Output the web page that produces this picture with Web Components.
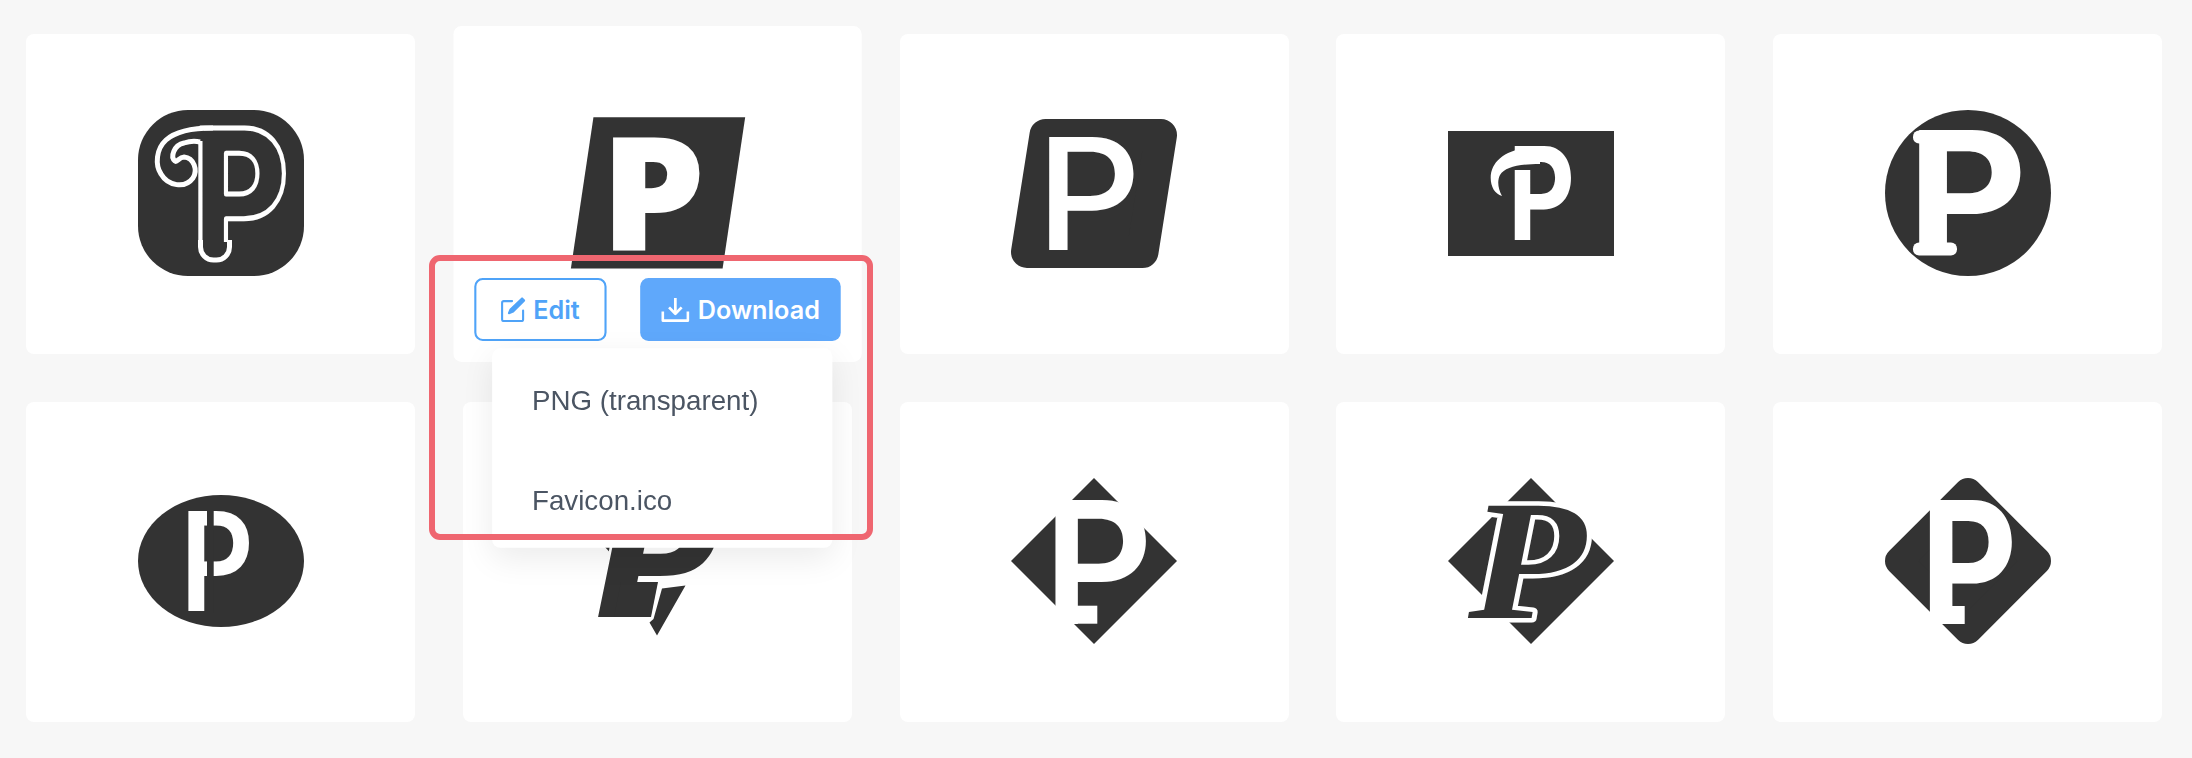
<!DOCTYPE html>
<html>
<head>
<meta charset="utf-8">
<title>Logos</title>
<style>
  html, body { margin: 0; background: #f7f7f7; }
  body { font-family: 'Inter', sans-serif; overflow: hidden; }
</style>
</head>
<body>
<logo-page>
  <logo-card><logo-mark name="curl"></logo-mark></logo-card>
  <logo-card active>
    <logo-mark name="slant"></logo-mark>
    <button-row slot="overlay"></button-row>
    <download-menu slot="overlay">
      <menu-item>PNG (transparent)</menu-item>
      <menu-item>Favicon.ico</menu-item>
    </download-menu>
  </logo-card>
  <logo-card><logo-mark name="round-slant"></logo-mark></logo-card>
  <logo-card><logo-mark name="rect"></logo-mark></logo-card>
  <logo-card><logo-mark name="circle"></logo-mark></logo-card>
  <logo-card><logo-mark name="oval"></logo-mark></logo-card>
  <logo-card><logo-mark name="shard"></logo-mark></logo-card>
  <logo-card><logo-mark name="diamond"></logo-mark></logo-card>
  <logo-card><logo-mark name="diamond-italic"></logo-mark></logo-card>
  <logo-card><logo-mark name="diamond-round"></logo-mark></logo-card>
  <red-frame slot="frame"></red-frame>
</logo-page>

<script>
const DARK = '#333';

// each logo is drawn at 166 wide, the P stays real text
const MARKS = {
  curl: { h: 166, svg: `
    <rect width="166" height="166" rx="50" fill="${DARK}"/>
    <text transform="translate(54 150) scale(.82 1)" font-family="Inter" font-weight="800" font-size="181" fill="${DARK}" stroke="#fff" stroke-width="5" stroke-linejoin="round">P</text>
    <path d="M62 20V31" stroke="${DARK}" stroke-width="8"/>
    <rect x="56" y="132" width="42" height="24" fill="${DARK}"/>
    <path d="M62.500 130V137a13 13 0 0 0 13 13h3a13 13 0 0 0 13-13V130" fill="none" stroke="#fff" stroke-width="5"/>
    <path d="M75 18C55 18 38 21 28 30C18 39 17 55 23 64C30 76 47 79 55 68C60 60 56 48 46 47C41 47 39 53 37 51C32 47 36 35 46 33C52 31 58 31 62 32" fill="none" stroke="#fff" stroke-width="5"/>` },
  slant: { h: 144, svg: `
    <polygon points="21.5,0 166,0 144.5,144 0,144" fill="${DARK}"/>
    <text transform="translate(28 126) scale(1.05 1)" font-family="Open Sans" font-weight="800" font-size="151" fill="#fff">P</text>` },
  'round-slant': { h: 149, svg: `
    <polygon points="34.5,16 150,16 131.5,133 16,133" fill="${DARK}" stroke="${DARK}" stroke-width="32" stroke-linejoin="round"/>
    <text transform="translate(25 131) scale(1.06 1)" font-family="Inter" font-weight="500" font-size="155" fill="#fff">P</text>` },
  rect: { h: 125, svg: `
    <rect width="166" height="125" fill="${DARK}"/>
    <text transform="translate(60 109) scale(.8 1)" font-family="Inter" font-weight="700" font-size="129" fill="#fff">P</text>
    <rect x="66" y="33" width="23" height="6" fill="${DARK}"/>
    <path d="M92 15.700C62 15.700 42.700 28 42.700 47C42.700 56 47 63 54 65C50 58 49 50 52 44C57 36 70 33 92 33Z" fill="#fff"/>` },
  circle: { h: 166, svg: `
    <circle cx="83" cy="83" r="83" fill="${DARK}"/>
    <text transform="translate(22 145.400) scale(1.08 1)" font-family="Inter" font-weight="700" font-size="172" fill="#fff">P</text>
    <rect x="28" y="20.400" width="24" height="13" rx="6" fill="#fff"/>
    <rect x="28" y="132.400" width="44" height="13" rx="6" fill="#fff"/>` },
  oval: { h: 132, svg: `
    <ellipse cx="83" cy="66" rx="83" ry="66" fill="${DARK}"/>
    <text transform="translate(41 116.400) scale(.85 1)" font-family="Lato" font-weight="700" font-size="138" fill="#fff">P</text>
    <rect x="69" y="15" width="6.700" height="103" fill="${DARK}"/>` },
  shard: { h: 166, svg: `
    <polygon points="31,69 37,69 39,78" fill="${DARK}"/>
    <polygon points="88,110.500 111.500,107.500 83,157.500 75.500,144.500 79.500,141" fill="${DARK}"/>
    <text transform="translate(20.500 139) scale(1.045 1)" font-family="DejaVu Sans" font-weight="700" font-style="italic" font-size="163" fill="${DARK}" stroke="#fff" stroke-width="5" paint-order="stroke">P</text>
    <polygon points="40,139 77,139 84,104 47,104" fill="${DARK}"/>` },
  diamond: { h: 166, svg: `
    <polygon points="83,0 166,83 83,166 0,83" fill="${DARK}"/>
    <text x="32" y="145.700" font-family="Inter" font-weight="600" font-size="171" fill="#fff">P</text>
    <rect x="66" y="127.700" width="20.300" height="18" fill="#fff"/>` },
  'diamond-italic': { h: 166, svg: `
    <polygon points="83,0 166,83 83,166 0,83" fill="${DARK}"/>
    <text transform="translate(20 140) scale(1.12 1)" font-family="Liberation Serif" font-weight="700" font-style="italic" font-size="172" fill="${DARK}" stroke="#fff" stroke-width="9" paint-order="stroke" stroke-linejoin="round">P</text>` },
  'diamond-round': { h: 166, svg: `
    <polygon points="83,14 152,83 83,152 14,83" fill="${DARK}" stroke="${DARK}" stroke-width="28" stroke-linejoin="round"/>
    <text transform="translate(35 146) scale(.88 1)" font-family="Inter" font-weight="700" font-size="171" fill="#fff">P</text>
    <rect x="67" y="128" width="12.700" height="18" fill="#fff"/>` }
};

const pageTpl = document.createElement('template');
pageTpl.innerHTML = `
  <style>
    :host { display: block; position: relative; width: 2192px; height: 758px; box-sizing: border-box; padding: 34px 0 0 26px; background: #f7f7f7; }
    .grid { display: grid; grid-template-columns: repeat(5, 389px); grid-auto-rows: 320px; gap: 48px 47.8px; }
  </style>
  <div class="grid"><slot></slot></div>
  <slot name="frame"></slot>
`;
class LogoPage extends HTMLElement {
  constructor() {
    super();
    this.attachShadow({ mode: 'open' });
    this.shadowRoot.appendChild(pageTpl.content.cloneNode(true));
  }
}

const cardTpl = document.createElement('template');
cardTpl.innerHTML = `
  <style>
    :host { display: flex; align-items: center; justify-content: center; position: relative; box-sizing: border-box; padding-bottom: 2px; background: #fff; border-radius: 8px; }
    :host([active]) { transform: scale(1.05); z-index: 2; }
  </style>
  <slot></slot>
  <slot name="overlay"></slot>
`;
class LogoCard extends HTMLElement {
  constructor() {
    super();
    this.attachShadow({ mode: 'open' });
    this.shadowRoot.appendChild(cardTpl.content.cloneNode(true));
  }
}

class LogoMark extends HTMLElement {
  constructor() {
    super();
    this.attachShadow({ mode: 'open' });
  }
  connectedCallback() {
    const mark = MARKS[this.getAttribute('name')];
    this.shadowRoot.innerHTML = `
      <style>
        :host { display: block; width: 166px; }
        svg { display: block; overflow: visible; }
      </style>
      <svg width="166" height="${mark.h}" viewBox="0 0 166 ${mark.h}">${mark.svg}</svg>`;
  }
}

const rowTpl = document.createElement('template');
rowTpl.innerHTML = `
  <style>
    :host { position: absolute; left: 20px; right: 20px; bottom: 20px; display: flex; justify-content: space-between; font: 600 24px 'Inter', sans-serif; }
    .btn { box-sizing: border-box; height: 60px; display: flex; align-items: center; justify-content: center; gap: 7px; border-radius: 8px; }
    .edit { width: 125.500px; border: 2px solid #4fa3f8; color: #4fa3f8; background: #fff; }
    .download { width: 191px; background: #5fa8fb; color: #fff; gap: 8px; }
    svg { display: block; flex: none; }
  </style>
  <div class="btn edit">
    <svg width="24" height="24" viewBox="0 0 24 24" fill="none" stroke="currentColor" stroke-width="2" stroke-linecap="round" stroke-linejoin="round">
      <path d="M11 4H3a1.500 1.500 0 0 0-1.500 1.500v16A1.500 1.500 0 0 0 3 23h17a1.500 1.500 0 0 0 1.500-1.500V13"/>
      <path d="M20.500 1.500l2 2L12 14l-4 1.500L9.500 12z" fill="currentColor"/>
    </svg>
    <span>Edit</span>
  </div>
  <div class="btn download">
    <svg width="27" height="24" viewBox="0 0 27 24" fill="none" stroke="currentColor" stroke-width="2.600" stroke-linejoin="round">
      <path d="M1.500 14v8.500h24V14"/>
      <path d="M13.500 1V15"/>
      <path d="M7.500 10l6 6 6-6"/>
    </svg>
    <span>Download</span>
  </div>
`;
class ButtonRow extends HTMLElement {
  constructor() {
    super();
    this.attachShadow({ mode: 'open' });
    this.shadowRoot.appendChild(rowTpl.content.cloneNode(true));
  }
}

const menuTpl = document.createElement('template');
menuTpl.innerHTML = `
  <style>
    :host { position: absolute; left: 37px; top: 307px; width: 324px; display: block; background: #fff; border-radius: 8px; box-shadow: 0 10px 30px rgba(0,0,0,.08); }
  </style>
  <slot></slot>
`;
class DownloadMenu extends HTMLElement {
  constructor() {
    super();
    this.attachShadow({ mode: 'open' });
    this.shadowRoot.appendChild(menuTpl.content.cloneNode(true));
  }
}

const itemTpl = document.createElement('template');
itemTpl.innerHTML = `
  <style>
    :host { display: flex; align-items: center; box-sizing: border-box; height: 95px; padding: 5px 0 0 38px; font: 400 26.400px 'Liberation Sans', sans-serif; color: #4b5563; }
  </style>
  <slot></slot>
`;
class MenuItem extends HTMLElement {
  constructor() {
    super();
    this.attachShadow({ mode: 'open' });
    this.shadowRoot.appendChild(itemTpl.content.cloneNode(true));
  }
}

const frameTpl = document.createElement('template');
frameTpl.innerHTML = `
  <style>
    :host { position: absolute; left: 429px; top: 255px; width: 444px; height: 285px; box-sizing: border-box; border: 6px solid #ef6670; border-radius: 11px; z-index: 5; }
  </style>
`;
class RedFrame extends HTMLElement {
  constructor() {
    super();
    this.attachShadow({ mode: 'open' });
    this.shadowRoot.appendChild(frameTpl.content.cloneNode(true));
  }
}

customElements.define('logo-page', LogoPage);
customElements.define('logo-card', LogoCard);
customElements.define('logo-mark', LogoMark);
customElements.define('button-row', ButtonRow);
customElements.define('download-menu', DownloadMenu);
customElements.define('menu-item', MenuItem);
customElements.define('red-frame', RedFrame);
</script>
</body>
</html>
